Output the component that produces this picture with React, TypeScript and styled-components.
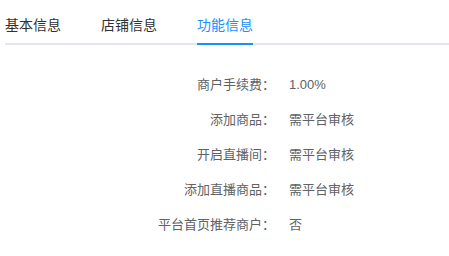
import React, { useState } from "react";
import styled, { createGlobalStyle } from "styled-components";

const GlobalStyle = createGlobalStyle`
  html, body {
    margin: 0;
    padding: 0;
    background: #fff;
  }
  body {
    font-family: "Liberation Sans", "Noto Sans CJK SC", sans-serif;
  }
`;

const Page = styled.div`
  padding: 3px 0 0 5px;
`;

const TabBar = styled.div`
  display: flex;
  height: 40px;
  border-bottom: 2px solid #e4e7ed;
`;

const Tab = styled.div<{ $active?: boolean }>`
  box-sizing: border-box;
  height: 42px;
  padding-top: 4px;
  line-height: 36px;
  margin-right: 40px;
  font-size: 14px;
  color: ${({ $active }) => ($active ? "#1890ff" : "#303133")};
  border-bottom: 2px solid ${({ $active }) => ($active ? "#1890ff" : "transparent")};
  cursor: pointer;
`;

const InfoList = styled.div`
  margin-top: 22px;
  display: flex;
  flex-direction: column;
`;

const Row = styled.div`
  display: flex;
  height: 35px;
  line-height: 35px;
  font-size: 13px;
  color: #606266;
`;

const Label = styled.div`
  width: 270px;
  text-align: right;
`;

const Value = styled.div`
  margin-left: 14px;
`;

const tabs = ["基本信息", "店铺信息", "功能信息"];

const rows = [
  { label: "商户手续费：", value: "1.00%" },
  { label: "添加商品：", value: "需平台审核" },
  { label: "开启直播间：", value: "需平台审核" },
  { label: "添加直播商品：", value: "需平台审核" },
  { label: "平台首页推荐商户：", value: "否" },
];

const App = () => {
  const [active, setActive] = useState(2);

  return (
    <Page>
      <GlobalStyle />
      <TabBar>
        {tabs.map((t, i) => (
          <Tab key={t} $active={i === active} onClick={() => setActive(i)}>
            {t}
          </Tab>
        ))}
      </TabBar>
      <InfoList>
        {rows.map((r) => (
          <Row key={r.label}>
            <Label>{r.label}</Label>
            <Value>{r.value}</Value>
          </Row>
        ))}
      </InfoList>
    </Page>
  );
};

export default App;
